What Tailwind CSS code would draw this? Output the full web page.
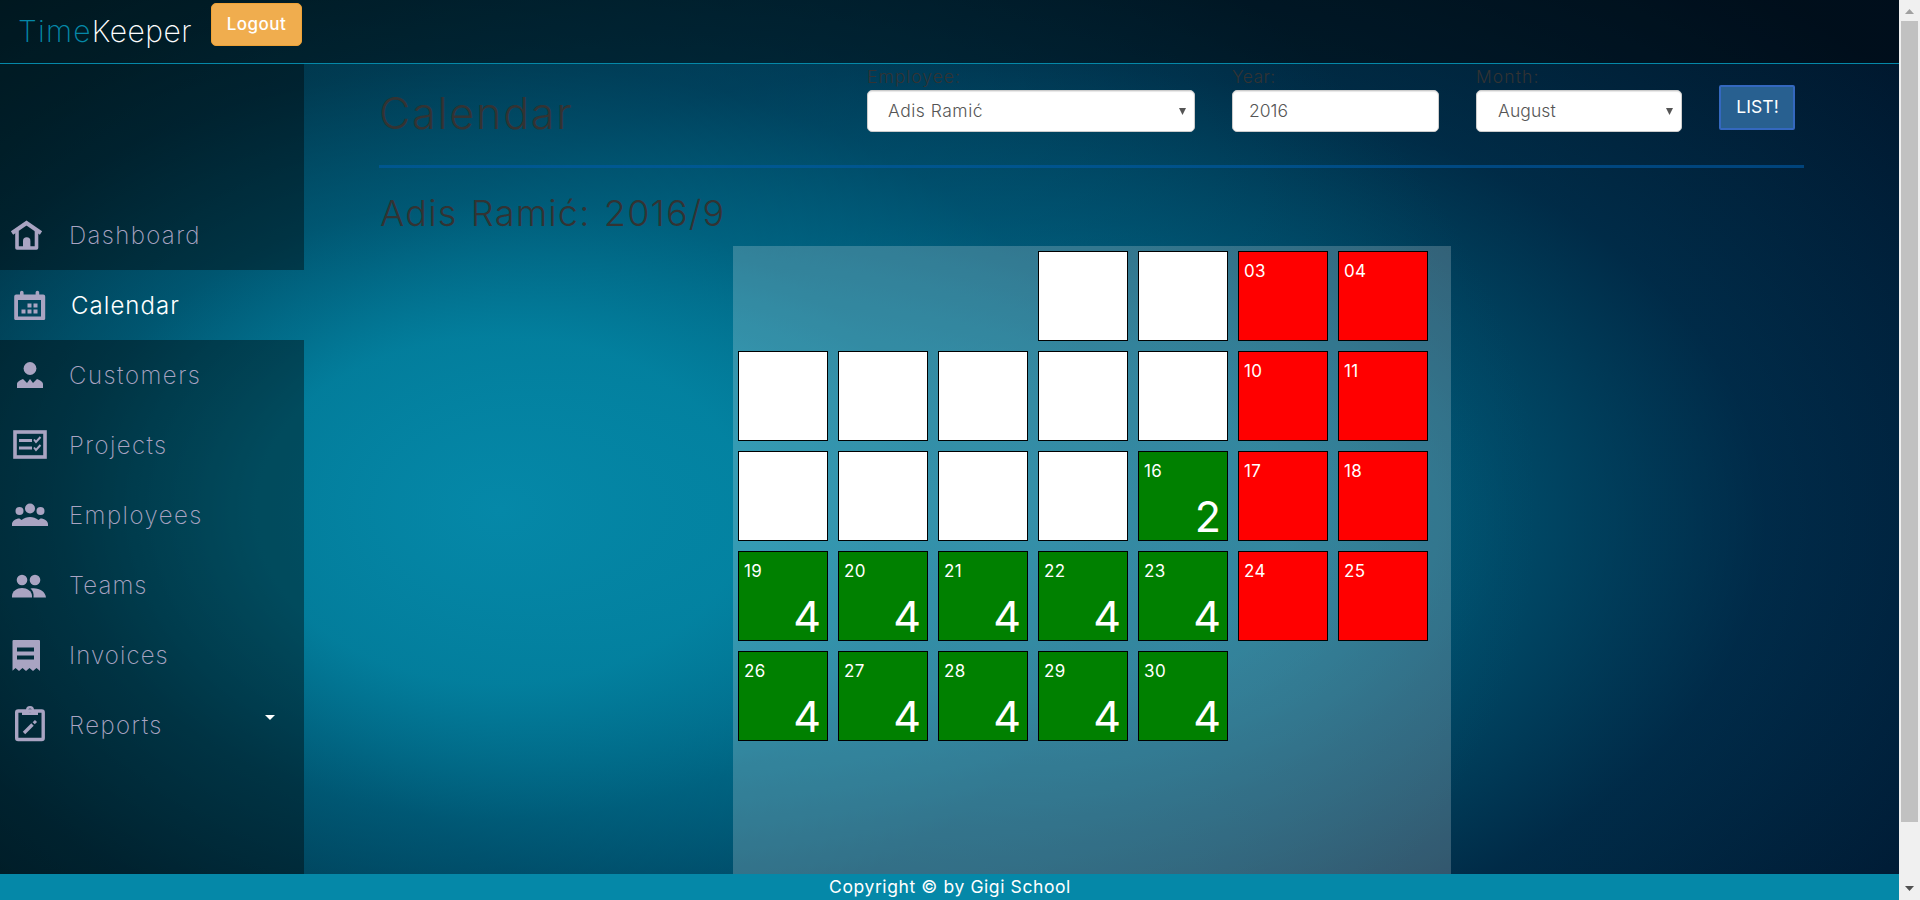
<!DOCTYPE html>
<html lang="en">
<head>
<meta charset="utf-8">
<title>TimeKeeper</title>
<script src="https://cdn.jsdelivr.net/npm/@tailwindcss/browser@4"></script>
</head>
<body class="h-[900px] overflow-hidden flex font-['Inter',sans-serif]">
<div class="w-[1899px] h-[900px] flex flex-col bg-[radial-gradient(ellipse_880px_620px_at_500px_510px,rgb(5_136_168/1)_0%,rgb(3_133_164/0.9)_28%,rgb(0_116_148/0.6)_50%,rgb(0_96_130/0.38)_72%,rgb(0_90_120/0)_118%),radial-gradient(ellipse_1020px_610px_at_1000px_520px,rgb(5_136_168/0.9)_0%,rgb(3_130_162/0.78)_28%,rgb(0_114_152/0.54)_50%,rgb(0_90_140/0.28)_75%,rgb(0_70_125/0)_115%),linear-gradient(100deg,#001e28,#001a2a_60%,#001830)]">
  <header class="h-16 shrink-0 flex items-start bg-black/40 border-b border-[#0588a8]">
    <div class="w-[211px] h-[63px] pl-[18px] flex items-center text-[30px] font-extralight whitespace-nowrap"><span class="text-[#0588a8] tracking-[1.2px]">Time</span><span class="text-white tracking-[0.5px]">Keeper</span></div>
    <button class="mt-[3px] w-[91px] h-[43px] rounded-[5px] bg-[#f0ad4e] border border-[#eea236] text-white text-[17px] font-medium tracking-[0.5px]">Logout</button>
  </header>
  <div class="flex h-[810px] shrink-0">
    <nav class="w-[304px] flex flex-col text-[24px] font-extralight text-[#a9a4c2]">
      <div class="h-[136px] bg-black/40"></div>
      <a class="h-[70px] flex items-center bg-black/40"><svg class="w-[69px] h-[70px]" viewBox="0.5 200 69 70" fill="none"><path d="M12.500 233 27 223 41.500 233" stroke="#a9a4c2" stroke-width="4"/><path d="M17.500 231V248H37V231" stroke="#a9a4c2" stroke-width="3.600" stroke-linejoin="round"/><path d="M23.500 248v-7a3.700 3.700 0 0 1 7.400 0v7z" fill="#a9a4c2"/></svg><span class="tracking-[1.35px] pt-[2px]">Dashboard</span></a>
      <a class="h-[70px] flex items-center text-white font-light"><svg class="w-[71px] h-[70px]" viewBox="0 270 71 70" fill="#a9a4c2"><path fill-rule="evenodd" d="M16 294.500h4v-2a1.800 1.800 0 0 1 3.600 0v2h12v-2a1.800 1.800 0 0 1 3.600 0v2h4a2 2 0 0 1 2 2v22a1.500 1.500 0 0 1-2 1.500h-27a1.500 1.500 0 0 1-2-1.500v-22a2 2 0 0 1 2-2zm2 5.500v16.500h23v-16.500z"/><path d="M27.500 303.500h4v4h-4zM33.500 303.500h4v4h-4zM21.500 309.500h4v4h-4zM27.500 309.500h4v4h-4zM33.500 309.500h4v4h-4z"/></svg><span class="tracking-[1.05px] pt-[2px]">Calendar</span></a>
      <a class="h-[70px] flex items-center bg-black/40"><svg class="w-[69px] h-[70px]" viewBox="0 340 69 70" fill="#a9a4c2"><circle cx="30" cy="368.500" r="6.400"/><path d="M17 388v-4c0-2 3-4 6-5l4 4 3-4 3 4 4-4c3 1 6 3 6 5v4z"/></svg><span class="tracking-[1.5px] pt-[2px]">Customers</span></a>
      <a class="h-[70px] flex items-center bg-black/40"><svg class="w-[69px] h-[70px]" viewBox="0 410 69 70" fill="none" stroke="#a9a4c2"><rect x="15" y="432" width="30" height="25" stroke-width="3.600"/><path d="M19 440.500h13M19 448h13" stroke-width="3"/><path d="m34 439.500 2 2.500 4.500-5M34 447.500l2 2.500 4.500-5" stroke-width="2"/></svg><span class="tracking-[1.4px] pt-[2px]">Projects</span></a>
      <a class="h-[70px] flex items-center bg-black/40"><svg class="w-[69px] h-[70px]" viewBox="0 480 69 70" fill="#a9a4c2"><circle cx="30" cy="508.500" r="5"/><circle cx="19.500" cy="511" r="4"/><circle cx="40.500" cy="511" r="4"/><path d="M12 526v-2c0-3 3.500-5.500 7.500-5.500l2 1.500c5-4 12-4 17 0l2-1.500c4 0 7.500 2.500 7.500 5.500v2z"/></svg><span class="tracking-[1.45px] pt-[2px]">Employees</span></a>
      <a class="h-[70px] flex items-center bg-black/40"><svg class="w-[69px] h-[70px]" viewBox="0 550 69 70" fill="#a9a4c2"><circle cx="22" cy="580" r="5.300"/><circle cx="35" cy="580" r="5.300"/><path d="M12 597.500v-1.500c0-5 5-8 10-8s10 3 10 8v1.500z"/><path d="M33.500 597.500c.5-4-.5-7-3-9 7-1.500 15 2 15.500 9z"/></svg><span class="tracking-[1.1px] pt-[2px]">Teams</span></a>
      <a class="h-[70px] flex items-center bg-black/40"><svg class="w-[69px] h-[70px]" viewBox="1 620 69 70"><path fill="#a9a4c2" fill-rule="evenodd" d="M13 640h27q1 0 1 1v30l-3.500-3-3.500 3-3.500-3-3.500 3-3.500-3-3.500 3-3.500-3-3 2.700v-29.700q0-1 1-1zm5 7.500v4h17v-4zm0 8v4h17v-4z"/></svg><span class="tracking-[1.1px] pt-[2px]">Invoices</span></a>
      <a class="h-[70px] flex items-center bg-black/40"><svg class="w-[69px] h-[70px]" viewBox="0 690 69 70" fill="none" stroke="#a9a4c2"><rect x="16.700" y="711" width="26.500" height="28.500" rx="1.500" stroke-width="3.400"/><path fill="#a9a4c2" stroke="none" fill-rule="evenodd" d="M22 715v-5h4a4 4 0 0 1 8 0h4v5zm8-6.500a2 2 0 1 0 0 4 2 2 0 0 0 0-4z"/><path d="m24 733 8.500-8.500" stroke-width="3.400"/><path d="m33.700 723.300 2.300-2.300" stroke-width="3"/></svg><span class="tracking-[1.45px] pt-[2px]">Reports</span><span class="ml-auto mr-[29px] mb-[15px] border-x-[5px] border-t-[5px] border-x-transparent border-t-white"></span></a>
      <div class="flex-1 bg-black/40"></div>
    </nav>
    <main class="pl-[75px] w-[1595px] text-[#333]">
      <div class="flex h-[101px] w-[1425px] text-[17.5px]">
        <h1 class="w-[488px] h-[100px] pb-px flex items-center text-[43px] font-[350] tracking-[1.8px]">Calendar</h1>
        <div class="w-[328px] mr-[37px]"><label class="h-[26px] flex items-center font-light tracking-[1px]">Employee:</label>
          <div class="h-[42px] pl-5 pr-[7px] flex items-center justify-between rounded-[5px] bg-white border border-[#ccc] shadow-[inset_0_1px_1px_rgb(0_0_0/0.1)] text-[#555]"><span class="tracking-[0.5px] font-light">Adis Ramić</span><svg class="w-[9px] h-[7px]" viewBox="0 0 9 7"><path fill="#555" d="M1 0h7L4.500 7z"/></svg></div></div>
        <div class="w-[207px] mr-[37px]"><label class="h-[26px] flex items-center font-light tracking-[0.4px]">Year:</label>
          <div class="h-[42px] pl-4 flex items-center rounded-[5px] bg-white border border-[#ccc] shadow-[inset_0_1px_1px_rgb(0_0_0/0.1)] text-[#555]"><span class="font-light">2016</span></div></div>
        <div class="w-[206px] mr-[37px]"><label class="h-[26px] flex items-center font-light tracking-[1.1px]">Month:</label>
          <div class="h-[42px] pl-[21px] pr-[7px] flex items-center justify-between rounded-[5px] bg-white border border-[#ccc] shadow-[inset_0_1px_1px_rgb(0_0_0/0.1)] text-[#555]"><span class="tracking-[0.1px] font-light">August</span><svg class="w-[9px] h-[7px]" viewBox="0 0 9 7"><path fill="#555" d="M1 0h7L4.500 7z"/></svg></div></div>
        <button class="mt-[21px] w-[76px] h-[45px] rounded-[2px] bg-[#286090] border-2 border-[#3468bf] text-white tracking-[0.1px] pl-px">LIST!</button>
      </div>
      <div class="h-[3px] w-[1425px] bg-[#005ca8]/60"></div>
      <h2 class="h-[78px] pt-[11px] pl-px flex items-center text-[36px] font-[350] tracking-[1.2px] [word-spacing:2px] whitespace-nowrap">Adis Ramić: 2016/9</h2>
      <section id="days" class="ml-[354px] w-[718px] h-[628px] pl-[5px] pt-[5px] bg-white/20 grid grid-cols-[repeat(7,90px)] auto-rows-[90px] gap-[10px] content-start text-white"></section>
    </main>
  </div>
  <footer class="h-[26px] shrink-0 bg-[#0588a8] text-white text-[17.5px] tracking-[0.6px] flex items-center justify-center pl-px">Copyright © by Gigi School</footer>
</div>
<div class="w-[21px] h-[900px] bg-[#f0f0f0] flex flex-col items-center">
  <div class="h-[21px] pt-[9px]"><svg class="w-[9px] h-[5px]" viewBox="0 0 9 5"><path fill="#a0a0a0" d="M0 5h9L4.500 0z"/></svg></div>
  <div class="w-[17px] h-[801px] bg-[#c1c1c1]"></div>
  <div class="flex-1 pt-[64px]"><svg class="w-[9px] h-[5px]" viewBox="0 0 9 5"><path fill="#505050" d="M0 0h9L4.500 5z"/></svg></div>
</div>
<script>
const grid = document.getElementById('days');
const hours = {16: 2, 19: 4, 20: 4, 21: 4, 22: 4, 23: 4, 26: 4, 27: 4, 28: 4, 29: 4, 30: 4};
let html = '';
for (let i = 0; i < 33; i++) {
  const day = i - 2;
  if (day < 1) { html += '<div></div>'; continue; }
  const label = String(day).padStart(2, '0');
  if (hours[day]) {
    html += `<div class="border border-black bg-[#008000] flex flex-col justify-between pl-[5px] pr-[6px]"><span class="text-[17px] leading-[38px] tracking-[0.4px]">${label}</span><span class="text-[43px] leading-[48px] text-right">${hours[day]}</span></div>`;
  } else if (i % 7 > 4) {
    html += `<div class="border border-black bg-[#ff0000] pl-[5px]"><span class="text-[17px] leading-[38px] tracking-[0.4px]">${label}</span></div>`;
  } else {
    html += '<div class="border border-black bg-white"></div>';
  }
}
grid.innerHTML = html;
</script>
</body>
</html>
